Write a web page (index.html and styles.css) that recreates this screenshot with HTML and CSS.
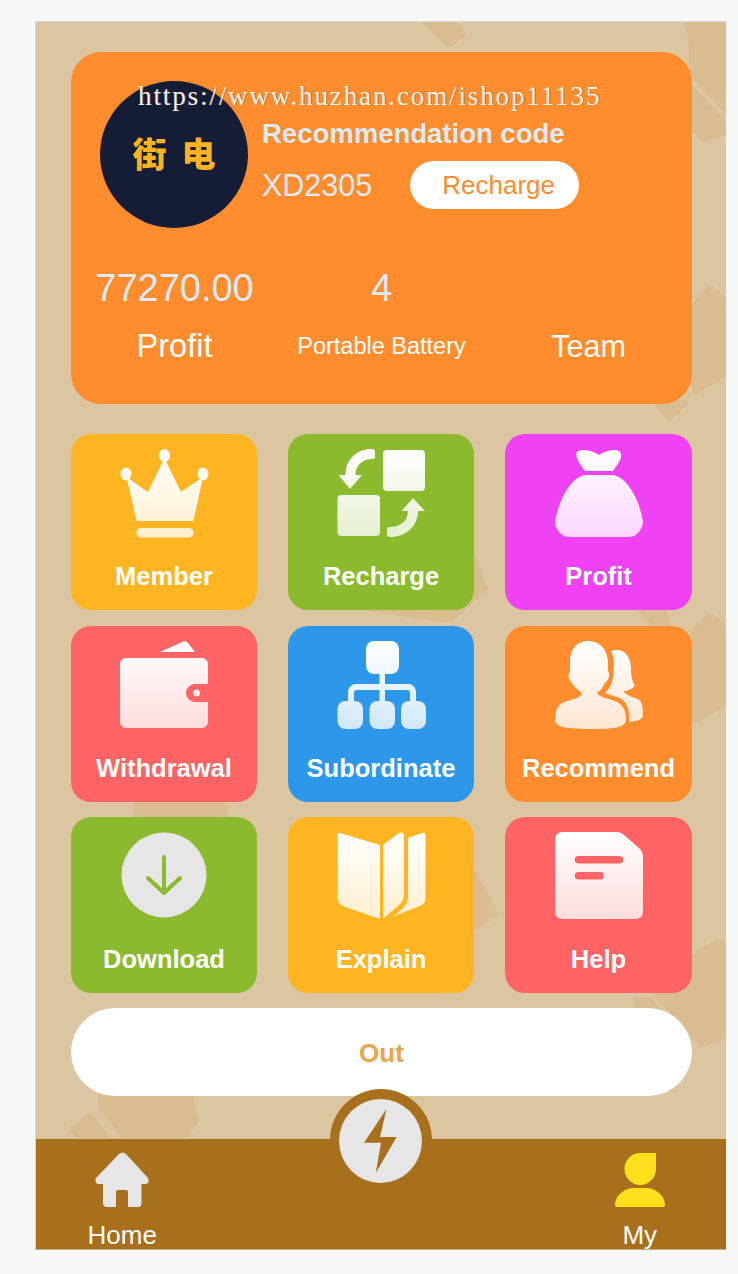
FILE: index.html
```html
<!DOCTYPE html>
<html lang="en">
<head>
  <meta charset="UTF-8" />
  <meta name="viewport" content="width=device-width, initial-scale=1.0" />
  <title>My</title>
  <link rel="stylesheet" href="styles.css">
</head>
<body>
  <svg class="defs" width="0" height="0">
    <defs>
      <linearGradient id="glow" gradientUnits="userSpaceOnUse" x1="0" y1="0" x2="0" y2="88">
        <stop offset="0" stop-color="#fff" />
        <stop offset="1" stop-color="#fff" stop-opacity="0.78" />
      </linearGradient>
    </defs>
  </svg>

  <div class="phone">
    <!-- background pattern -->
    <svg class="pattern" viewBox="36 22 690 1227" width="690" height="1227">
      <g fill="#d9bc8f" stroke="#d9bc8f" stroke-width="6" stroke-linejoin="round">
        <path d="M424 20 L449 45 L463 34 L452 20Z" />
        <path d="M686 20 C693 40 693 60 691 72 L730 114 V20Z" />
        <path d="M691 88 L730 130 L705 139 L691 126Z" />
        <path d="M691 310 L710 288 L730 305 V370 L695 392Z" />
        <path d="M657 403 L670 418 L685 403Z" />
        <path d="M694 632 L710 616 L730 632 V698 L700 719 L682 720Z" />
        <path d="M694 957 L717 942 L730 946 V1032 L703 1045 L657 995Z" />
        <path d="M636 606 L660 606 L668 623 L657 626 Z" />
        <path d="M470 550 L485 588 L450 620 L367 608 L420 560Z" />
        <path d="M470 867 L494 913 L470 931Z" />
        <path d="M138 800 H220 L228 820 H136Z" />
        <path d="M101 1097 V1105 L128 1142 H179 L196 1120 L190 1097Z" />
        <path d="M90 1116 L72 1130 L86 1142 H110Z" />
        <path d="M636 1000 L650 1000 L688 1058 L680 1068 L642 1020Z" />
      </g>
    </svg>

    <div class="content">
      <div class="card">
        <div class="watermark">https://www.huzhan.com/ishop11135</div>
        <div class="profile">
          <div class="avatar">街 电</div>
          <div class="info">
            <div class="code-title">Recommendation code</div>
            <div class="code-row">
              <span class="code">XD2305</span>
              <a class="recharge-btn">Recharge</a>
            </div>
          </div>
        </div>
        <div class="stats">
          <div class="stat">
            <div class="stat-value">77270.00</div>
            <div class="stat-label wide">Profit</div>
          </div>
          <div class="stat">
            <div class="stat-value">4</div>
            <div class="stat-label small">Portable Battery</div>
          </div>
          <div class="stat">
            <div class="stat-value"></div>
            <div class="stat-label">Team</div>
          </div>
        </div>
      </div>

      <div class="menu">
        <div class="tile yellow">
          <svg class="icon" viewBox="0 0 88 88" fill="url(#glow)">
            <ellipse cx="44.5" cy="6.5" rx="5.5" ry="6.5" />
            <ellipse cx="6" cy="25" rx="5.5" ry="6.5" />
            <ellipse cx="83" cy="25" rx="5.5" ry="6.5" />
            <path d="M44.5 9 L61 43 L83 28 L73.5 72 H16.5 L6.5 28 L28 43Z" />
            <rect x="16.5" y="79" width="57" height="9.5" rx="4.5" />
          </svg>
          <div class="tile-label">Member</div>
        </div>
        <div class="tile green">
          <svg class="icon" viewBox="0 0 88 88" fill="url(#glow)">
            <rect x="46" y="1" width="42" height="41" rx="4" />
            <rect x="0.5" y="46" width="42.5" height="41" rx="4" />
            <path d="M35 0 Q38 0 38 3 V8 Q38 10 35 10 C26 10 18.5 16 18.5 26 H25 L13 40 L1.5 26 H8.5 C8.5 10 20 0 35 0Z" />
            <path d="M53 88 Q50 88 50 85 V80 Q50 78 53 78 C63 78 71 72 71 62 H64.5 L76 49 L88 62 H81 C81 78 68 88 53 88Z" />
          </svg>
          <div class="tile-label">Recharge</div>
        </div>
        <div class="tile magenta">
          <svg class="icon" viewBox="0 0 88 88" fill="url(#glow)">
            <path d="M22 3 C28 -1 38 2 44 6 C50 2 60 -1 65 3 C69 8 62 16 58 22 H30 C26 16 19 8 22 3Z" />
            <path d="M30 26 H58 C72 28 84 50 88 72 C88 80 82 88 74 88 H14 C6 88 0 80 0 72 C4 50 16 28 30 26Z" />
          </svg>
          <div class="tile-label">Profit</div>
        </div>

        <div class="tile red">
          <svg class="icon" viewBox="0 0 88 88" fill="url(#glow)">
            <path d="M40 11 L62 1 Q66 -1 68 2 L75 11Z" />
            <path d="M6 17 H82 a6 6 0 0 1 6 6 V43 H75 a9 9 0 0 0 0 18 H88 V81 a6 6 0 0 1 -6 6 H6 a6 6 0 0 1 -6 -6 V23 a6 6 0 0 1 6 -6Z" />
            <ellipse cx="76.5" cy="52" rx="3.5" ry="3.5" />
          </svg>
          <div class="tile-label">Withdrawal</div>
        </div>
        <div class="tile blue">
          <svg class="icon" viewBox="0 0 88 88" fill="url(#glow)">
            <rect x="29" y="0" width="33" height="33" rx="8" />
            <rect x="0.5" y="60" width="25.5" height="28" rx="8" />
            <rect x="32.5" y="60" width="25.5" height="28" rx="8" />
            <rect x="64" y="60" width="25" height="28" rx="8" />
            <path d="M42.5 33 H48 V43 H71 a8 8 0 0 1 8 8 V60 H73 V52 a3 3 0 0 0 -3 -3 H48 V60 H42.5 V49 H20 a3 3 0 0 0 -3 3 V60 H11 V51 a8 8 0 0 1 8 -8 H42.5Z" />
          </svg>
          <div class="tile-label">Subordinate</div>
        </div>
        <div class="tile orange">
          <svg class="icon" viewBox="0 0 88 88" fill="url(#glow)">
            <path d="M33 0 C46 0 53 10 53 22 L53 30 C56 34 53 40 50 42 C48 46 46 49 42 52 C44 56 52 57 60 60 C68 63 71 70 71 78 C71 85 66 88 36 88 C6 88 0 85 0 78 C0 68 4 62 12 60 C20 58 26 56 27 52 C23 49 19 46 17 42 C14 40 12 34 15 30 L15 20 C15 8 22 0 33 0Z" />
            <path d="M56 10 C68 6 76 14 76 28 C76 36 78 42 80 44 C78 48 72 50 69 50 C70 54 78 56 83 58 C87 60 88 66 88 74 C88 78 84 80 74 81 C75 70 73 62 65 57 C60 55 54 54 50 52 C54 48 57 44 58 36 C59 28 60 18 56 10Z" />
          </svg>
          <div class="tile-label">Recommend</div>
        </div>

        <div class="tile green">
          <svg class="icon" viewBox="0 0 88 88">
            <circle cx="44" cy="43" r="42.5" fill="#e6e6e6" />
            <path d="M44 25 V61 M28 46 L44 61 L60 46" fill="none" stroke="#8bba2e" stroke-width="4" stroke-linecap="round" stroke-linejoin="round" />
          </svg>
          <div class="tile-label">Download</div>
        </div>
        <div class="tile yellow">
          <svg class="icon" viewBox="0 0 88 88" fill="url(#glow)">
            <path d="M3 1 L43 13 V87 L8 75 Q0.5 72 0.5 66 V3 Q0.5 1 3 1Z" />
            <path d="M46 13 L62 1 Q67 -1 67 4 V62 Q67 69 61 74 L46 87Z" />
            <path d="M71 6 L85 1 Q88.5 0 88.5 3 V66 Q88.5 72 83 74 L57 84 L66 76 Q71 71 71 64Z" />
          </svg>
          <div class="tile-label">Explain</div>
        </div>
        <div class="tile red">
          <svg class="icon" viewBox="0 0 88 88" fill="url(#glow)">
            <path fill-rule="evenodd" d="M8 0 H62 Q66 0 69 3 L84 16 Q88 20 88 24 V79 Q88 87 80 87 H8 Q0 87 0 79 V8 Q0 0 8 0Z M23.5 24 a3.75 3.75 0 0 0 0 7.5 H64.5 a3.75 3.75 0 0 0 0 -7.5Z M23.5 40 a3.75 3.75 0 0 0 0 7.5 H45 a3.75 3.75 0 0 0 0 -7.5Z" />
          </svg>
          <div class="tile-label">Help</div>
        </div>
      </div>

      <a class="out-btn">Out</a>
    </div>

    <div class="tabbar">
      <div class="tab">
        <svg class="tab-icon" viewBox="0 0 56 56" fill="#e6e6e6">
          <path d="M25 2 Q28.5 -1 32 2 L54 26 Q56 32 51 32 H47.5 V51 Q47.5 55 44 55 H34 V40 Q34 38 32 38 H24 Q22 38 22 40 V55 H13 Q9 55 9 51 V32 H5 Q0 32 2 26Z" />
        </svg>
        <div class="tab-label">Home</div>
      </div>
      <div class="tab tab-last">
        <svg class="tab-icon" viewBox="0 0 56 56" fill="#ffe01d">
          <path d="M28 1 H44 V17 A15.75 16 0 0 1 12.5 17 A15.75 16 0 0 1 28 1Z" />
          <path d="M3 53 C3 43 13 36 22 36 H34 C43 36 53 43 53 53 Q53 55 51 55 H5 Q3 55 3 53Z" />
        </svg>
        <div class="tab-label">My</div>
      </div>
      <div class="bolt-badge">
        <div class="bolt-inner">
          <svg viewBox="0 0 83 84" width="83" height="84" fill="#a86f1c">
            <path d="M47.5 10 L25 43.7 H42 L36.8 74 L57.6 38 H41Z" />
          </svg>
        </div>
      </div>
    </div>
  </div>
</body>
</html>
```

FILE: styles.css
```css
html, body {
  margin: 0;
  padding: 0;
}
body {
  height: 1274px;
  overflow: hidden;
  background: #f6f7f7;
  font-family: "Liberation Sans", Arial, sans-serif;
  color: #fff;
}
.defs {
  display: block;
}
.phone {
  position: relative;
  width: 690px;
  height: 1227px;
  margin: 21px 0 0 35px;
  border-top: 1px solid #d6d6d6;
  border-left: 1px solid #d6d6d6;
  border-bottom: 1px solid #c9ab7c;
  background: #dbc6a1;
  overflow: hidden;
}
.pattern {
  position: absolute;
  left: 0;
  top: 0;
}
.content {
  position: relative;
  padding: 30px 34px 0 35px;
}

/* top card */
.card {
  position: relative;
  height: 352px;
  box-sizing: border-box;
  padding-top: 29px;
  background: #ff8d2e;
  border-radius: 30px;
}
.watermark {
  position: absolute;
  left: 67px;
  top: 30px;
  font-family: "Liberation Serif", serif;
  font-size: 27px;
  line-height: 28px;
  letter-spacing: 1.88px;
  white-space: nowrap;
  color: #f6f1ea;
  text-shadow: 1px 0 0 rgba(120, 105, 90, 0.55);
  z-index: 2;
}
.profile {
  display: flex;
  padding-left: 29px;
  gap: 14px;
}
.avatar {
  width: 148px;
  height: 147px;
  border-radius: 50%;
  background: #141c36;
  color: #ffb31f;
  font-family: "Noto Sans CJK SC", sans-serif;
  font-weight: 900;
  font-size: 34px;
  line-height: 143px;
  word-spacing: 7px;
  text-align: center;
  white-space: pre;
}
.info {
  padding-top: 36px;
  color: #dfeaf5;
}
.code-title {
  font-size: 27.5px;
  font-weight: bold;
  line-height: 34px;
}
.code-row {
  display: flex;
  align-items: center;
  gap: 38px;
  margin-top: 10px;
}
.code {
  font-size: 30.5px;
}
.recharge-btn {
  width: 169px;
  height: 48px;
  box-sizing: border-box;
  padding-left: 32px;
  background: #fff;
  border-radius: 24px;
  color: #ff8d2e;
  font-size: 26px;
  line-height: 48px;
}
.stats {
  display: grid;
  grid-template-columns: repeat(3, 1fr);
  margin-top: 38px;
  text-align: center;
}
.stat-value {
  height: 44px;
  font-size: 38px;
  line-height: 44px;
  color: #dfeaf5;
}
.stat-label {
  height: 40px;
  margin-top: 16px;
  font-size: 30.5px;
  line-height: 40px;
}
.stat-label.wide {
  font-size: 32.5px;
}
.stat-label.small {
  font-size: 23.5px;
}

/* menu tiles */
.menu {
  display: grid;
  grid-template-columns: 186px 186px 187px;
  grid-auto-rows: 176px;
  column-gap: 31px;
  row-gap: 15.5px;
  margin-top: 30px;
}
.tile {
  display: flex;
  flex-direction: column;
  align-items: center;
  padding-top: 15px;
  box-sizing: border-box;
  border-radius: 20px;
}
.icon {
  display: block;
  width: 88px;
  height: 88px;
  overflow: visible;
}
.tile-label {
  margin-top: 24px;
  font-size: 25.5px;
  font-weight: bold;
  line-height: 30px;
  white-space: nowrap;
}
.yellow { background: #ffb522; }
.green { background: #8bba2e; }
.magenta { background: #ef42f5; }
.red { background: #ff6464; }
.blue { background: #2d98e9; }
.orange { background: #ff8d2e; }

.out-btn {
  display: block;
  height: 88px;
  margin-top: 15px;
  background: #fff;
  border-radius: 44px;
  color: #e6a84e;
  font-size: 26px;
  font-weight: bold;
  line-height: 90px;
  text-align: center;
}

/* bottom bar */
.tabbar {
  position: relative;
  display: grid;
  grid-template-columns: repeat(4, 1fr);
  height: 110px;
  margin-top: 43px;
  background: #a86f1c;
}
.tab {
  display: flex;
  flex-direction: column;
  align-items: center;
  padding-top: 13px;
}
.tab-last {
  grid-column: 4;
}
.tab-icon {
  display: block;
  width: 56px;
  height: 56px;
}
.tab-label {
  margin-top: 12px;
  font-size: 26px;
  line-height: 30px;
}
.bolt-badge {
  position: absolute;
  left: 294px;
  top: -50px;
  width: 102px;
  height: 102px;
  box-sizing: border-box;
  padding: 10px 0 0 9px;
  border-radius: 50%;
  background: #a86f1c;
}
.bolt-inner {
  width: 83px;
  height: 84px;
  border-radius: 50%;
  background: #e6e6e6;
}
.bolt-inner svg {
  display: block;
}
```
